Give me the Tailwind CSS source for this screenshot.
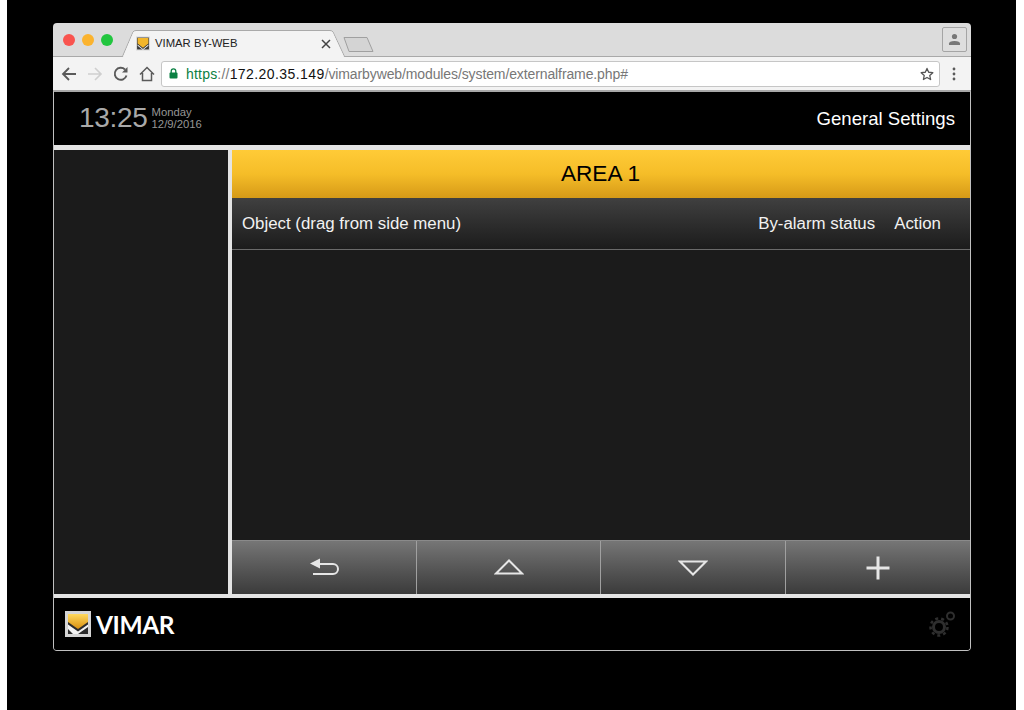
<!DOCTYPE html>
<html><head><meta charset="utf-8"><title>VIMAR BY-WEB</title>
<script src="https://cdn.jsdelivr.net/npm/@tailwindcss/browser@4"></script></head>
<body class="bg-white font-['Liberation_Sans',Arial,sans-serif] overflow-hidden">
<div class="ml-[7px] w-[1009px] h-[710px] bg-black pt-[23px] pl-[46px]">
 <div class="w-[918px] h-[628px] flex flex-col rounded-[4px] overflow-hidden">
  <!-- title bar -->
  <div class="relative h-[34px] shrink-0 bg-[#dcdcdc] border-b border-[#a9a9a9] flex items-center pl-[10px] pr-[4px]">
   <div class="flex gap-[7px]">
    <span class="w-[12px] h-[12px] rounded-full bg-[#f9544f]"></span>
    <span class="w-[12px] h-[12px] rounded-full bg-[#fbb32e]"></span>
    <span class="w-[12px] h-[12px] rounded-full bg-[#22c63f]"></span>
   </div>
   <svg class="absolute left-[67px] top-[6px]" width="260" height="28" viewBox="0 0 260 28"><path d="M0 27.500H2.500L13 3Q14 1.500 16 1.500H210Q212 1.500 213 3L224.500 27.500H260" fill="#f3f3f3" stroke="#a9a9a9"/><path d="M3 28L13.500 3H212.500L224 28Z" fill="#f3f3f3"/><path d="M224 8.500H247L253 22.500H229Z" fill="#d4d4d4" stroke="#a0a0a0" stroke-linejoin="round"/></svg>
   <div class="relative ml-[23px] mt-[8px] flex items-center w-[198px]">
    <svg width="14" height="15" viewBox="0 0 26 26" class="shrink-0"><rect width="26" height="26" fill="#d9d9d9"/><rect x="2" y="2" width="22" height="22" fill="#3a3a3a"/><path d="M3 3H23V13L13 21L3 13Z" fill="#f2b62c"/><path d="M3 15L13 23L23 15V17L13 25L3 17Z" fill="#f1f1f1"/></svg>
    <span class="ml-[5px] text-[11.300px] leading-none text-[#222] whitespace-nowrap">VIMAR BY-WEB</span>
    <svg class="ml-auto mr-[3px]" width="10" height="10" viewBox="0 0 10 10"><path d="M1 1L9 9M9 1L1 9" stroke="#444" stroke-width="1.500"/></svg>
   </div>
   <div class="ml-auto w-[25px] h-[25px] rounded-[2px] border border-[#a5a5a5] bg-[#dedede] flex items-center justify-center">
    <svg width="13" height="13" viewBox="0 0 13 13"><circle cx="6.500" cy="3.500" r="2.600" fill="#777"/><path d="M1 12V10.500Q1 8 6.500 8T12 10.500V12Z" fill="#777"/></svg>
   </div>
  </div>
  <!-- toolbar -->
  <div class="h-[33px] shrink-0 bg-[#f3f3f3] flex items-center pl-[8px]">
   <svg width="16" height="16" viewBox="0 0 16 16" fill="none" stroke="#5a5a5a" stroke-width="1.800"><path d="M15 8H2M8 2L2 8L8 14"/></svg>
   <svg class="ml-[10px]" width="16" height="16" viewBox="0 0 16 16" fill="none" stroke="#cfcfcf" stroke-width="1.600"><path d="M1 8H14M8 2L14 8L8 14"/></svg>
   <svg class="ml-[10px]" width="16" height="16" viewBox="0 0 16 16" fill="none" stroke="#5a5a5a" stroke-width="1.900"><path d="M13.500 9.500A6 6 0 1 1 12 3.500"/><path d="M14.500 1V6.500H9" fill="#5a5a5a" stroke="none"/></svg>
   <svg class="ml-[10px]" width="16" height="16" viewBox="0 0 16 16" fill="none" stroke="#5a5a5a" stroke-width="1.500"><path d="M1 8.500L8 1.500L15 8.500M3.500 7V14.500H12.500V7"/></svg>
   <div class="ml-[6px] w-[779px] h-[26px] bg-white border border-[#c6c6c6] rounded-[3px] flex items-center pl-[7px] pr-[5px]">
    <svg width="9" height="11" viewBox="0 0 9 11"><path d="M2.200 5V3.200A2.300 2.300 0 0 1 6.800 3.200V5" fill="none" stroke="#0b8043" stroke-width="1.300"/><rect x="0.500" y="4.500" width="8" height="6" rx="1" fill="#0b8043"/></svg>
    <span class="ml-[8px] text-[14px] leading-none whitespace-nowrap text-[#777] tracking-[-0.11px]"><span class="text-[#0b8043] tracking-[0.2px]">https</span><span class="tracking-[0.2px]">://</span><span class="text-[#111] tracking-[0.42px]">172.20.35.149</span>/vimarbyweb/modules/system/externalframe.php#</span>
    <svg class="ml-auto" width="14" height="14" viewBox="0 0 24 24" fill="none" stroke="#555" stroke-width="2.200"><path d="M12 2.500L14.900 9L22 9.700L16.700 14.500L18.200 21.500L12 17.900L5.800 21.500L7.300 14.500L2 9.700L9.100 9Z" stroke-linejoin="round"/></svg>
   </div>
   <svg class="ml-[12px]" width="4" height="14" viewBox="0 0 4 14" fill="#5a5a5a"><circle cx="2" cy="2" r="1.400"/><circle cx="2" cy="7" r="1.400"/><circle cx="2" cy="12" r="1.400"/></svg>
  </div>
  <!-- app -->
  <div class="flex-1 min-h-0 flex flex-col border-x border-b border-[#c0c0c0] border-t-2 border-t-[#a8a8a8] rounded-b-[3px] bg-black">
   <header class="h-[53px] shrink-0 flex items-center pl-[25px] pr-[15px]">
    <span class="text-[28px] tracking-[-0.3px] leading-none text-[#a9a9a9] -mt-[1px]">13:25</span>
    <div class="ml-[4px] -mt-[1px] text-[11.300px] leading-[12px] text-[#969696]"><div>Monday</div><div>12/9/2016</div></div>
    <span class="ml-auto mt-[1px] text-[18.600px] text-white">General Settings</span>
   </header>
   <div class="flex-1 min-h-0 flex bg-[#e4e4e4] pt-[5px] pb-[4px] gap-[4px]">
    <aside class="w-[174px] shrink-0 bg-[#1b1b1b]"></aside>
    <main class="flex-1 min-w-0 flex flex-col bg-[#1b1b1b]">
     <div class="h-[48px] shrink-0 bg-gradient-to-b from-[#ffcb37] via-[#f5bd28] to-[#d69a17] flex items-center justify-center pb-[1px] pr-[1px] text-[22.600px] text-black">AREA 1</div>
     <div class="h-[52px] shrink-0 bg-gradient-to-b from-[#404040] to-[#1c1c1c] border-b border-[#6a6a6a] flex items-center pl-[10px] pr-[29px] text-[16.850px] text-[#f2f2f2]">
      <span>Object (drag from side menu)</span>
      <span class="ml-auto">By-alarm status</span>
      <span class="ml-[19px]">Action</span>
     </div>
     <div class="flex-1 min-h-0"></div>
     <div class="h-[54px] shrink-0 flex border-t border-[#8a8a8a] bg-gradient-to-b from-[#767676] to-[#3b3b3b]">
      <div class="w-[185px] flex items-center justify-center border-r border-[#a0a0a0]">
       <svg class="ml-[2px] -mt-[1px]" width="30" height="20" viewBox="0 0 30 20" fill="none"><path d="M3 17H23A5 5 0 0 0 23 7H9" stroke="#e6e6e6" stroke-width="2"/><path d="M0 6.500L10 1.500V11.500Z" fill="#e6e6e6"/></svg>
      </div>
      <div class="w-[184px] flex items-center justify-center border-r border-[#a0a0a0]">
       <svg class="-mt-[2px]" width="30" height="16" viewBox="0 0 30 16" fill="none"><path d="M2 14.500H28L15 1.500Z" stroke="#e6e6e6" stroke-width="2"/></svg>
      </div>
      <div class="w-[185px] flex items-center justify-center border-r border-[#a0a0a0]">
       <svg width="30" height="16" viewBox="0 0 30 16" fill="none"><path d="M2 1.500H28L15 14.500Z" stroke="#e6e6e6" stroke-width="2"/></svg>
      </div>
      <div class="flex-1 flex items-center justify-center">
       <svg class="mt-[1px]" width="24" height="24" viewBox="0 0 24 24"><path d="M12 0.500V23.500M0.500 12H23.500" stroke="#e6e6e6" stroke-width="3"/></svg>
      </div>
     </div>
    </main>
   </div>
   <footer class="h-[52px] shrink-0 flex items-center pl-[11px] pr-[13px]">
    <svg width="26" height="26" viewBox="0 0 26 26"><defs><linearGradient id="g" x1="0" y1="0" x2="0" y2="1"><stop offset="0" stop-color="#ffd95e"/><stop offset="1" stop-color="#d9900f"/></linearGradient></defs><rect width="26" height="26" fill="#d5d5d5"/><rect x="3" y="3" width="20" height="20" fill="#2c2c2c"/><path d="M3 3H23V11L13 18L3 11Z" fill="url(#g)"/><path d="M3 13.500L13 20.500L23 13.500V16L13 23H3Z" fill="#f3f3f3"/><path d="M3 18L8 23H3ZM23 18L18 23H23Z" fill="#2c2c2c"/></svg>
    <span class="ml-[5px] mt-[2px] text-[24.500px] leading-none font-bold text-white font-['Lato',sans-serif] tracking-[-0.4px]">VIMAR</span>
    <svg class="ml-auto -mt-[1px]" width="28" height="28" viewBox="0 0 28 28" fill="none" stroke="#2e2e2e"><circle cx="10" cy="17" r="5.500" stroke-width="3"/><circle cx="10" cy="17" r="8.500" stroke-width="2.500" stroke-dasharray="3 3"/><circle cx="21.500" cy="6" r="3.500" stroke-width="2"/></svg>
   </footer>
  </div>
 </div>
</div>
</body></html>
